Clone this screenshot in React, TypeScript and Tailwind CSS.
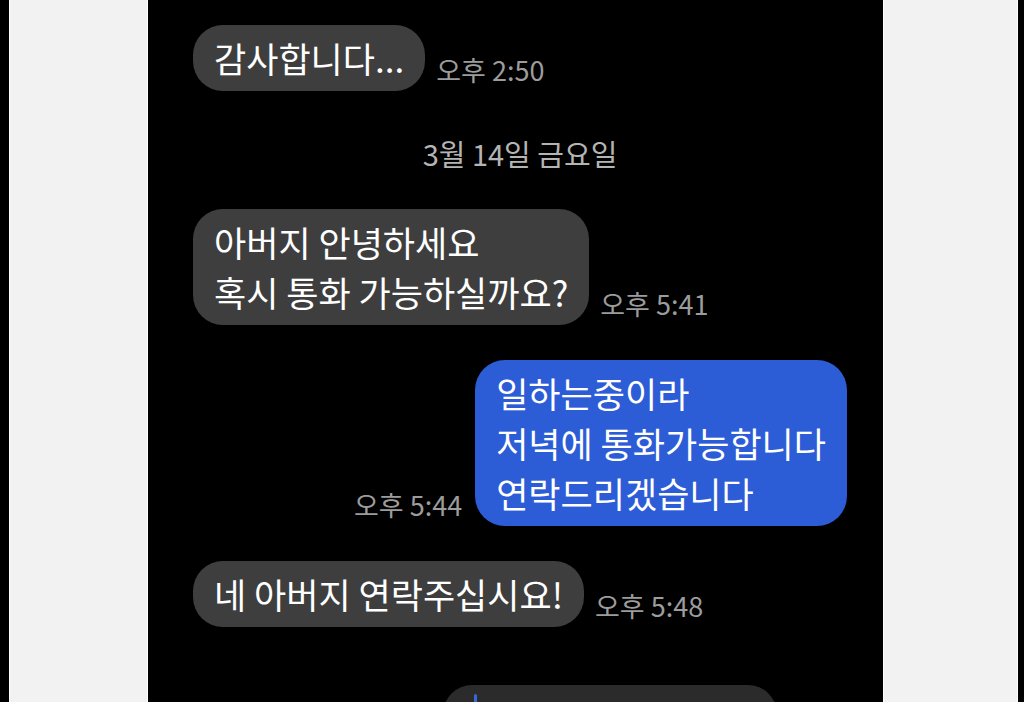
const font = { fontFamily: '"Noto Sans CJK KR", "Noto Sans", sans-serif' };

function Time({ children }: { children: React.ReactNode }) {
  return (
    <span className="pb-[5px] text-[27px] leading-[32px] whitespace-nowrap text-[#9c9c9c]">
      {children}
    </span>
  );
}

function Received({ lines, time }: { lines: string[]; time: string }) {
  return (
    <div className="flex items-end gap-[11px]">
      <div className="rounded-[30px] bg-[#3e3e3e] px-[21px] py-[8px] text-[35px] leading-[50px] text-white">
        {lines.map((l) => (
          <div key={l} className="whitespace-nowrap">
            {l}
          </div>
        ))}
      </div>
      <Time>{time}</Time>
    </div>
  );
}

function Sent({ lines, time }: { lines: string[]; time: string }) {
  return (
    <div className="flex items-end justify-end gap-[13px]">
      <Time>{time}</Time>
      <div className="rounded-[30px] bg-[#2d5cd7] px-[21px] py-[8px] text-[35px] leading-[50px] text-white">
        {lines.map((l) => (
          <div key={l} className="whitespace-nowrap">
            {l}
          </div>
        ))}
      </div>
    </div>
  );
}

export default function App() {
  return (
    <div className="flex h-[702px] w-full overflow-hidden bg-black pl-[9px] pr-[6px]" style={font}>
      <div className="w-[139px] border-x border-white bg-[#f2f2f2]" />
      <div className="flex flex-1 flex-col pl-[45px] pr-[36px] pt-[25px]">
        <Received lines={["감사합니다..."]} time="오후 2:50" />
        <div className="mt-[44px] text-center text-[29px] leading-[36px] text-[#b4b4b4]">
          3월 14일 금요일
        </div>
        <div className="mt-[38px]">
          <Received lines={["아버지 안녕하세요", "혹시 통화 가능하실까요?"]} time="오후 5:41" />
        </div>
        <div className="mt-[35px]">
          <Sent lines={["일하는중이라", "저녁에 통화가능합니다", "연락드리겠습니다"]} time="오후 5:44" />
        </div>
        <div className="mt-[35px]">
          <Received lines={["네 아버지 연락주십시요!"]} time="오후 5:48" />
        </div>
        <div className="mt-[58px] ml-[250px] h-[60px] w-[334px] rounded-t-[30px] bg-[#2b2b2b] pl-[31px] pt-[9px]">
          <div className="h-[20px] w-[3px] rounded-full bg-[#3a66d8]" />
        </div>
      </div>
      <div className="w-[135px] border-x border-white bg-[#f2f2f2]" />
    </div>
  );
}
